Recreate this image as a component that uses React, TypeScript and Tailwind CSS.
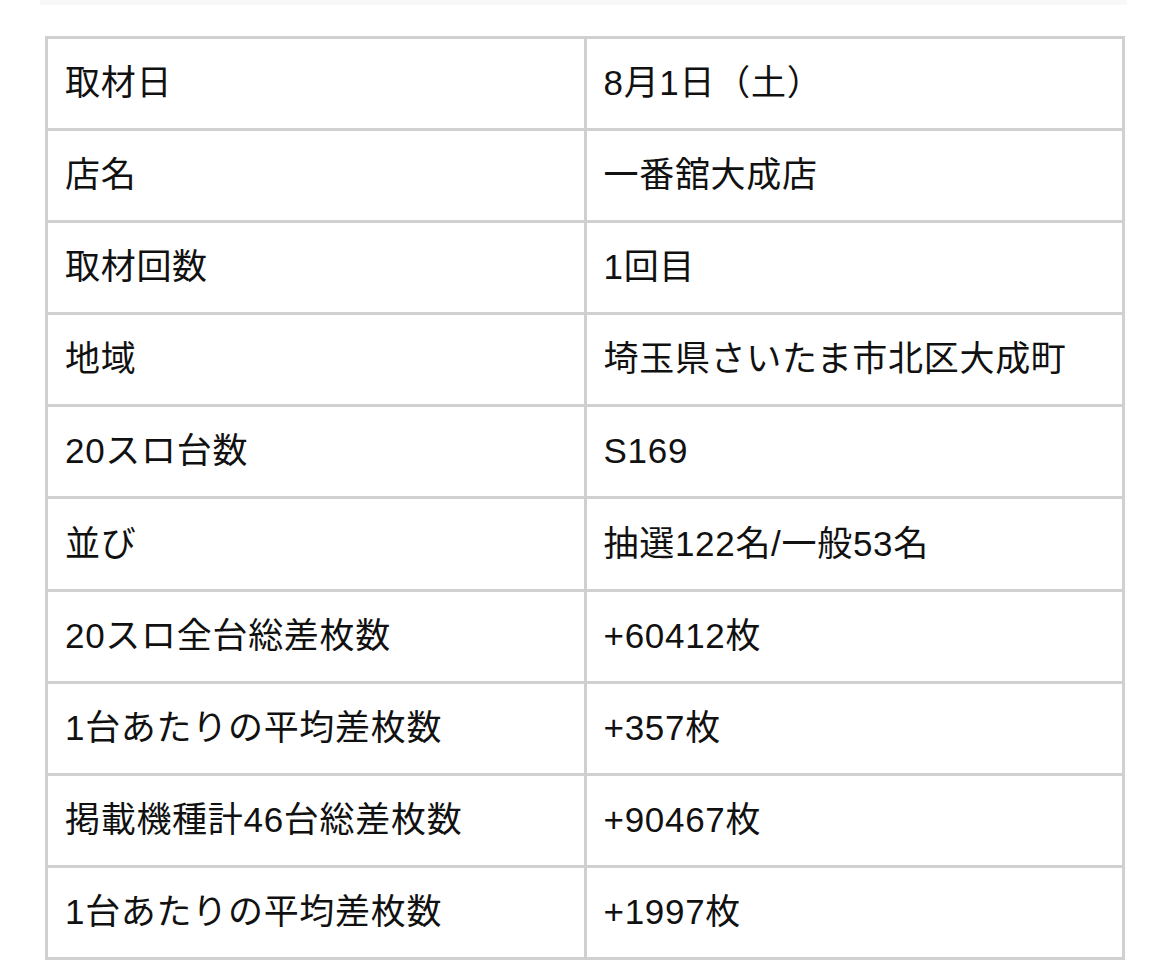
const rows: [string, string][] = [
  ["取材日", "8月1日（土）"],
  ["店名", "一番舘大成店"],
  ["取材回数", "1回目"],
  ["地域", "埼玉県さいたま市北区大成町"],
  ["20スロ台数", "S169"],
  ["並び", "抽選122名/一般53名"],
  ["20スロ全台総差枚数", "+60412枚"],
  ["1台あたりの平均差枚数", "+357枚"],
  ["掲載機種計46台総差枚数", "+90467枚"],
  ["1台あたりの平均差枚数", "+1997枚"],
];

const App = () => {
  return (
    <div
      className="min-h-[969px] w-[1170px] bg-white text-[#111]"
      style={{ fontFamily: '"Liberation Sans", "Noto Sans CJK JP", sans-serif' }}
    >
      {/* faint strip from the previous block */}
      <div className="ml-[40px] h-[5px] w-[1087px] bg-[#f8f8f8]" />

      <table className="mt-[31px] ml-[45px] w-[1080px] table-fixed border-collapse border-[3px] border-[#d0d0d0]">
        <tbody>
          {rows.map(([label, value], i) => (
            <tr key={i} className="h-[92.1px]">
              <td className="w-1/2 border-[3px] border-[#d0d0d0] pb-[2px] pl-[17px] text-[35px] leading-none tracking-[0.7px]">
                {label}
              </td>
              <td className="w-1/2 border-[3px] border-[#d0d0d0] pb-[2px] pl-[17px] text-[35px] leading-none tracking-[0.7px]">
                {value}
              </td>
            </tr>
          ))}
        </tbody>
      </table>
    </div>
  );
};

export default App;
